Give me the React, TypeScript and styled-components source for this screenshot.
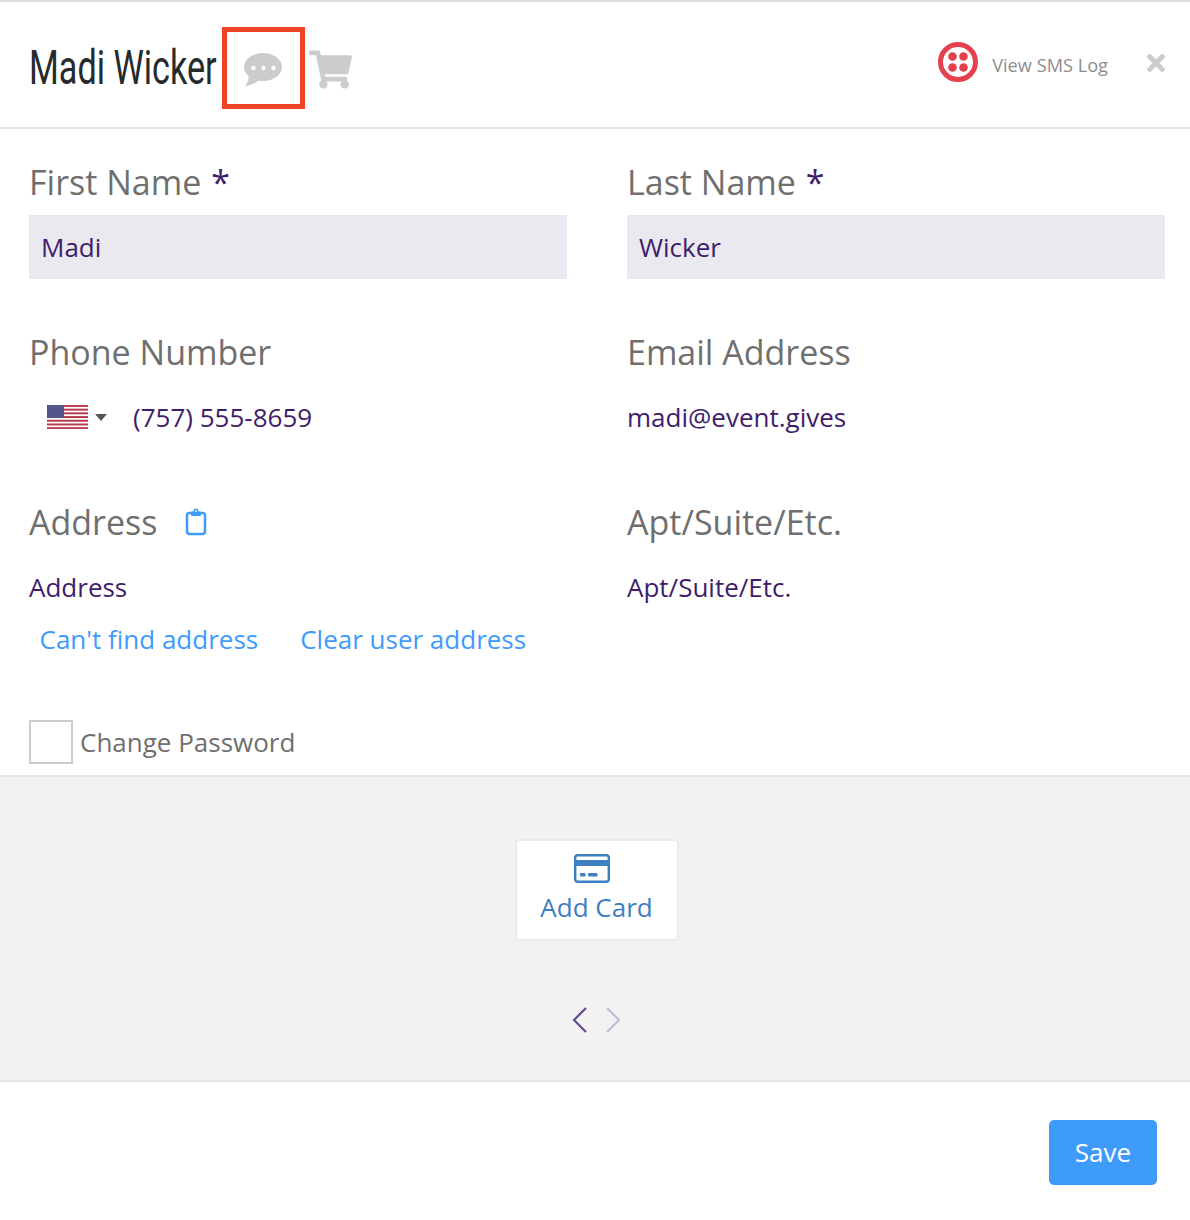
import React from "react";
import styled, { createGlobalStyle } from "styled-components";
import { FaShoppingCart, FaTimes } from "react-icons/fa";

const Global = createGlobalStyle`
  html, body { margin: 0; padding: 0; background: #fff; }
  body { font-family: "Open Sans", "Liberation Sans", sans-serif; }
`;

const Page = styled.div`
  width: 1190px;
  height: 1220px;
  display: flex;
  flex-direction: column;
  background: #fff;
  border-top: 2px solid #dddddd;
  box-sizing: border-box;
`;

const Header = styled.header`
  height: 127px;
  box-sizing: border-box;
  border-bottom: 2px solid #e4e4e4;
  display: flex;
  align-items: flex-start;
  padding-left: 29px;
  flex: none;
`;

const Title = styled.h1`
  margin: 38px 0 0;
  font-family: "Roboto", "Liberation Sans", sans-serif;
  font-weight: 400;
  font-size: 49px;
  line-height: 56px;
  color: #272a2b;
  white-space: nowrap;
  width: 187px;
  transform: scaleX(0.697);
  transform-origin: left center;
`;

const ChatSlot = styled.div`
  position: relative;
  margin: 51px 0 0 28px;
  width: 38px;
  height: 33px;
  color: #cccccc;
`;

const Highlight = styled.div`
  position: absolute;
  left: -22px;
  top: -26px;
  width: 83px;
  height: 82px;
  box-sizing: border-box;
  border: 5px solid #ee4423;
`;

const CartIcon = styled(FaShoppingCart)`
  margin: 48px 0 0 27px;
  width: 43px;
  height: 39px;
  color: #cccccc;
`;

const HeaderRight = styled.div`
  margin-left: auto;
  display: flex;
  align-items: flex-start;
  padding-right: 25px;
`;

const LogLink = styled.span`
  margin: 51px 0 0 14px;
  font-size: 18.2px;
  line-height: 24px;
  color: #8e8e8e;
`;

const Logo = styled.svg`
  margin-top: 40px;
  width: 40px;
  height: 40px;
`;

const CloseIcon = styled(FaTimes)`
  margin: 48px 0 0 39px;
  width: 18px;
  height: 26px;
  color: #cccccc;
`;

const Form = styled.form`
  flex: none;
  height: 646px;
  box-sizing: border-box;
  padding: 33px 25px 0 29px;
  display: grid;
  grid-template-columns: 538px 538px;
  grid-template-rows: 170px 170px 170px auto;
  column-gap: 60px;
  margin: 0;
`;

const Field = styled.div`
  display: flex;
  flex-direction: column;
`;

const Label = styled.label`
  height: 40px;
  margin-bottom: 13px;
  display: flex;
  align-items: center;
  font-size: 34px;
  line-height: 40px;
  color: #6f6f6f;
`;

const Required = styled.span`
  color: #3f1d6b;
  margin-left: 10px;
`;

const Input = styled.div<{ $filled?: boolean }>`
  height: 64px;
  box-sizing: border-box;
  display: flex;
  align-items: center;
  font-size: 26px;
  color: #3f1d6b;
  background: ${(p) => (p.$filled ? "#ebe9f0" : "transparent")};
  padding-left: ${(p) => (p.$filled ? "12px" : "0")};
`;

const FlagBox = styled.div`
  display: flex;
  align-items: center;
  margin: 0 26px 0 18px;
`;

const Caret = styled.span`
  margin-left: 7px;
  border-left: 6px solid transparent;
  border-right: 6px solid transparent;
  border-top: 7px solid #555;
`;

const ClipIcon = styled.svg`
  margin-left: 27px;
  width: 22px;
  height: 28px;
`;

const Links = styled.div`
  display: flex;
  gap: 42px;
  padding: 2px 0 0 10.5px;
  font-size: 26px;
  line-height: 36px;
  color: #3f9bfa;
  white-space: nowrap;
`;

const CheckRow = styled.div`
  margin-top: 48px;
  display: flex;
  align-items: center;
  gap: 7px;
  font-size: 26px;
  color: #6f6f6f;
  grid-column: 1 / span 2;
  height: 44px;
`;

const Check = styled.span`
  width: 44px;
  height: 44px;
  box-sizing: border-box;
  border: 2px solid #cccccc;
`;

const Cards = styled.section`
  flex: none;
  height: 307px;
  box-sizing: border-box;
  background: #f2f2f2;
  border-top: 2px solid #e6e6e6;
  border-bottom: 2px solid #e6e6e6;
  padding-left: 3px;
  display: flex;
  flex-direction: column;
  align-items: center;
`;

const AddCard = styled.button`
  margin-top: 62px;
  width: 164px;
  height: 102px;
  box-sizing: border-box;
  background: #fff;
  border: 2px solid #ebebeb;
  border-radius: 5px;
  padding: 13px 0 0;
  font-family: inherit;
  font-size: 26px;
  line-height: 36px;
  color: #3d7fc1;
  display: flex;
  flex-direction: column;
  align-items: center;
`;

const CardIcon = styled.svg`
  width: 36px;
  height: 29px;
  margin: 0 9px 6px 0;
  flex: none;
`;

const Pager = styled.div`
  margin-top: 65px;
  display: flex;
  gap: 17px;
`;

const Chevron = styled.svg`
  width: 16px;
  height: 28px;
`;

const Footer = styled.footer`
  flex: 1;
  display: flex;
  justify-content: flex-end;
  align-items: flex-start;
  padding: 38px 33px 0 0;
`;

const Save = styled.button`
  width: 108px;
  height: 65px;
  border: 0;
  border-radius: 5px;
  padding: 0 0 2px;
  background: #3f9bfa;
  color: #fff;
  font-family: inherit;
  font-size: 26px;
`;

export default function App() {
  return (
    <Page>
      <Global />
      <Header>
        <Title>Madi Wicker</Title>
        <ChatSlot>
          <svg viewBox="0 0 38 33" width="38" height="33">
            <path
              fill="currentColor"
              d="M19 0C8.500 0 0 6.300 0 14c0 3.600 1.800 6.900 4.800 9.300-.2 3.400-1.600 6.700-3.800 9.700 4.500-.4 9.400-2.200 13.200-5.300 1.500.2 3.100.3 4.800.3 10.500 0 19-6.300 19-14S29.500 0 19 0z"
            />
            <circle cx="9.500" cy="15" r="2.200" fill="#fff" />
            <circle cx="19.500" cy="15" r="2.200" fill="#fff" />
            <circle cx="29.500" cy="15" r="2.200" fill="#fff" />
          </svg>
          <Highlight />
        </ChatSlot>
        <CartIcon />
        <HeaderRight>
          <Logo viewBox="0 0 40 40">
            <circle cx="20" cy="20" r="17.500" fill="none" stroke="#e5404d" strokeWidth="5" />
            <circle cx="14.500" cy="14.500" r="4.300" fill="#e5404d" />
            <circle cx="25.500" cy="14.500" r="4.300" fill="#e5404d" />
            <circle cx="14.500" cy="25.500" r="4.300" fill="#e5404d" />
            <circle cx="25.500" cy="25.500" r="4.300" fill="#e5404d" />
          </Logo>
          <LogLink>View SMS Log</LogLink>
          <CloseIcon />
        </HeaderRight>
      </Header>

      <Form>
        <Field>
          <Label>
            First Name<Required>*</Required>
          </Label>
          <Input $filled>Madi</Input>
        </Field>
        <Field>
          <Label>
            Last Name<Required>*</Required>
          </Label>
          <Input $filled>Wicker</Input>
        </Field>
        <Field>
          <Label>Phone Number</Label>
          <Input>
            <FlagBox>
              <svg viewBox="0 0 41 24" width="41" height="24">
                <rect width="41" height="24" fill="#fff" />
                {[0, 1, 2, 3, 4, 5, 6].map((i) => (
                  <rect key={i} y={i * 3.7} width="41" height="1.900" fill="#b5384a" />
                ))}
                <rect width="17" height="13" fill="#55558c" />
              </svg>
              <Caret />
            </FlagBox>
            (757) 555-8659
          </Input>
        </Field>
        <Field>
          <Label>Email Address</Label>
          <Input>madi@event.gives</Input>
        </Field>
        <Field>
          <Label>
            Address
            <ClipIcon viewBox="0 0 22 28">
              <rect x="2" y="5" width="18" height="21" rx="2.500" fill="none" stroke="#3f9bfa" strokeWidth="2.500" />
              <rect x="6" y="3.500" width="10" height="4.500" rx="1" fill="#3f9bfa" />
              <circle cx="11" cy="3" r="2.500" fill="#3f9bfa" />
              <circle cx="11" cy="3" r="0.900" fill="#fff" />
            </ClipIcon>
          </Label>
          <Input>Address</Input>
          <Links>
            <span>Can't find address</span>
            <span>Clear user address</span>
          </Links>
        </Field>
        <Field>
          <Label>Apt/Suite/Etc.</Label>
          <Input>Apt/Suite/Etc.</Input>
        </Field>
        <CheckRow>
          <Check />
          Change Password
        </CheckRow>
      </Form>

      <Cards>
        <AddCard type="button">
          <CardIcon viewBox="0 0 36 29">
            <rect x="1.200" y="1.200" width="33.600" height="26.600" rx="2.500" fill="none" stroke="#3d7fc1" strokeWidth="2.400" />
            <rect x="1" y="6" width="34" height="6" fill="#3d7fc1" />
            <rect x="6" y="19" width="5.500" height="3.400" rx="1" fill="#3d7fc1" />
            <rect x="14" y="19" width="9.500" height="3.400" rx="1" fill="#3d7fc1" />
          </CardIcon>
          Add Card
        </AddCard>
        <Pager>
          <Chevron viewBox="0 0 16 28">
            <path d="M14 2 2 14l12 12" fill="none" stroke="#654a8c" strokeWidth="2.200" />
          </Chevron>
          <Chevron viewBox="0 0 16 28">
            <path d="M2 2l12 12L2 26" fill="none" stroke="#c5bbd6" strokeWidth="2.200" />
          </Chevron>
        </Pager>
      </Cards>

      <Footer>
        <Save type="button">Save</Save>
      </Footer>
    </Page>
  );
}
